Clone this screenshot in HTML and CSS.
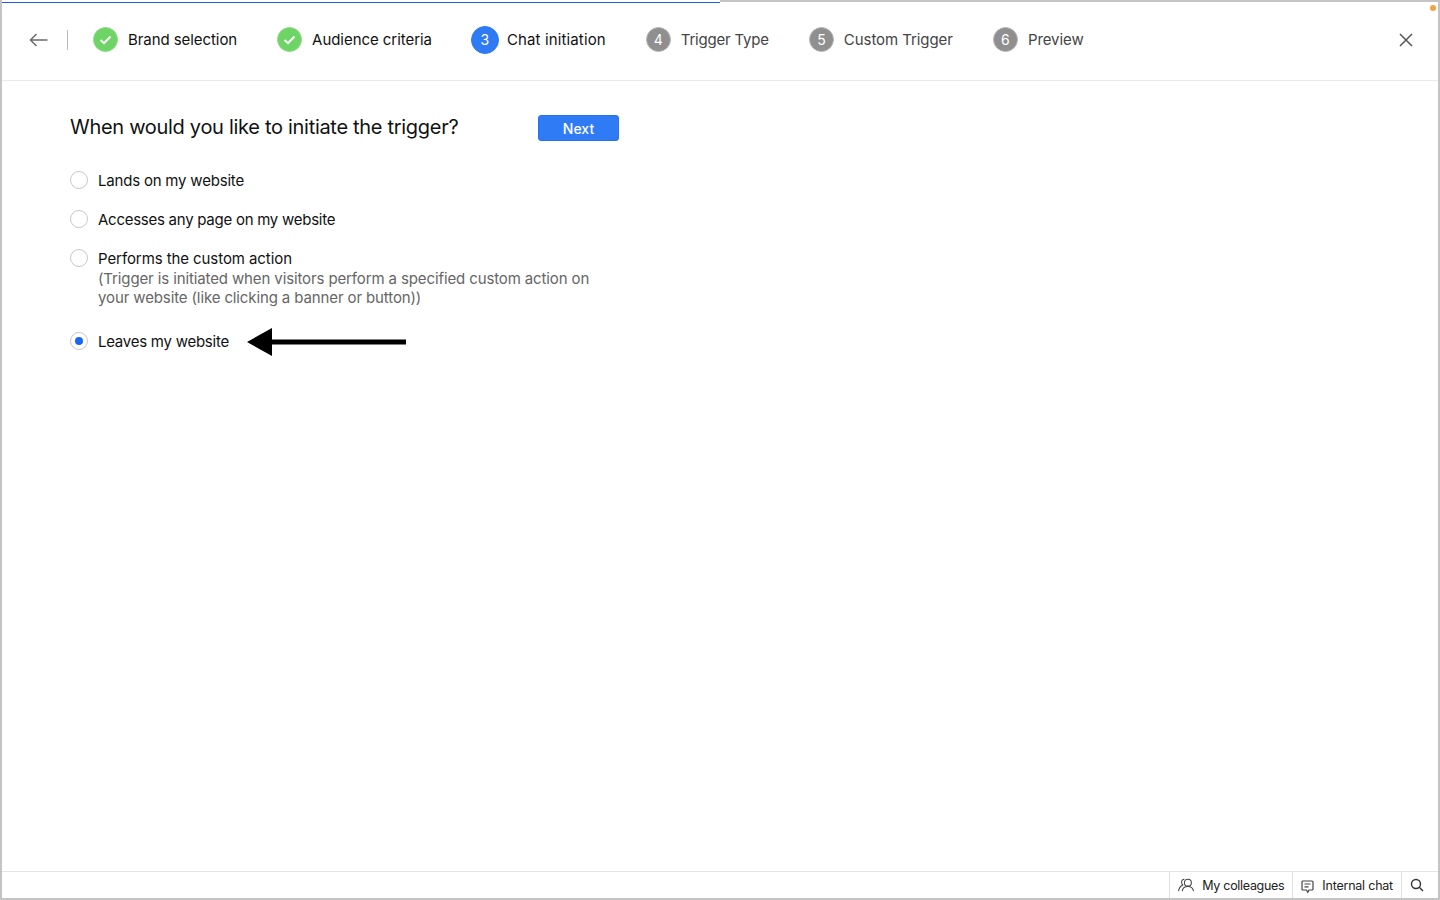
FILE: index.html
```html
<!DOCTYPE html>
<html lang="en">
<head>
<meta charset="utf-8">
<title>Chat initiation</title>
<link rel="stylesheet" href="styles.css">
</head>
<body>
<div class="frame">
  <div class="progress"><div class="progress-fill"></div><div class="progress-rest"></div></div>
  <span class="notice-dot"></span>
  <header class="topbar">
    <button class="icon-btn back" aria-label="Back">
      <svg width="20" height="14" viewBox="0 0 20 14" fill="none" stroke="#6b6b6b" stroke-width="1.5"><path d="M18.5 7H1.5M7.5 1L1.5 7L7.5 13"/></svg>
    </button>
    <span class="divider"></span>
    <ol class="steps">
      <li class="step done"><span class="badge"><svg width="13" height="10" viewBox="0 0 13 10" fill="none" stroke="#fff" stroke-width="2"><path d="M1.5 5L5 8.2L11.5 1.5"/></svg></span><span class="step-label">Brand selection</span></li>
      <li class="step done"><span class="badge"><svg width="13" height="10" viewBox="0 0 13 10" fill="none" stroke="#fff" stroke-width="2"><path d="M1.5 5L5 8.2L11.5 1.5"/></svg></span><span class="step-label">Audience criteria</span></li>
      <li class="step active"><span class="badge">3</span><span class="step-label">Chat initiation</span></li>
      <li class="step tight"><span class="badge">4</span><span class="step-label">Trigger Type</span></li>
      <li class="step"><span class="badge">5</span><span class="step-label">Custom Trigger</span></li>
      <li class="step"><span class="badge">6</span><span class="step-label">Preview</span></li>
    </ol>
    <button class="icon-btn close" aria-label="Close">
      <svg width="14" height="14" viewBox="0 0 14 14" fill="none" stroke="#555" stroke-width="1.5"><path d="M1 1L13 13M13 1L1 13"/></svg>
    </button>
  </header>
  <main class="content">
    <div class="question-row">
      <h1 class="question">When would you like to initiate the trigger?</h1>
      <button class="next">Next</button>
    </div>
    <div class="options">
      <div class="option"><span class="radio"></span><div class="option-text">Lands on my website</div></div>
      <div class="option narrow"><span class="radio"></span><div class="option-text">Accesses any page on my website</div></div>
      <div class="option wide"><span class="radio"></span><div class="option-text">Performs the custom action<p class="hint">(Trigger is initiated when visitors perform a specified custom action on your website (like clicking a banner or button))</p></div></div>
      <div class="option selected"><span class="radio checked"></span><div class="option-text">Leaves my website</div>
        <svg class="arrow" width="160" height="28" viewBox="0 0 160 28"><path d="M0 14L25 0V11.500H159V16.500H25V28Z" fill="#000"/></svg>
      </div>
    </div>
  </main>
  <footer class="bottombar">
    <div class="bar-item people"><svg width="16" height="14" viewBox="0 0 17 14" fill="none" stroke="#444" stroke-width="1.1"><circle cx="10.500" cy="4.500" r="3.700"/><path d="M4.500 13.500C4.800 10.500 7 8.500 10.500 8.500S16 10.500 16.500 13.500"/><path d="M6.800 .8C4.800 .8 3.800 2.500 3.800 4.200C3.800 5.400 4.200 6.400 5 7C2.800 8 1 10.500 .6 13.500"/></svg><span>My colleagues</span></div>
    <div class="bar-item chat"><svg class="chat-icon" width="13" height="14" viewBox="0 0 13 14" fill="none" stroke="#444" stroke-width="1.2"><path d="M2 1H11Q12 1 12 2V9Q12 10 11 10H8L6.800 12.300L5.500 10H2Q1 10 1 9V2Q1 1 2 1Z"/><path d="M3.500 4H9.500M3.500 6.800H7.500"/></svg><span>Internal chat</span></div>
    <div class="bar-item search"><svg width="14" height="14" viewBox="0 0 14 14" fill="none" stroke="#333" stroke-width="1.4"><circle cx="6" cy="6" r="4.500"/><path d="M9.300 9.300L13 13"/></svg></div>
  </footer>
</div>
</body>
</html>
```
FILE: styles.css
```css
* { box-sizing: border-box; }
html, body { margin: 0; height: 100%; }
body { font-family: Inter, "Noto Sans", "Liberation Sans", sans-serif; color: #111; background: #fff; overflow: hidden; }
button { font: inherit; border: 0; background: none; padding: 0; }

.frame { position: relative; height: 900px; display: flex; flex-direction: column; border: 2px solid #c4c4c4; border-top: 0; }
.progress { height: 3px; display: flex; flex: none; }
.progress-fill { width: 718px; height: 3px; border-bottom: 1px solid #1a5cf0; }
.progress-rest { flex: 1; height: 2px; background: #c4c4c4; }
.notice-dot { position: absolute; top: 5px; right: 2px; width: 6px; height: 6px; border-radius: 50%; background: #f5a23c; }

.topbar { height: 78px; flex: none; display: flex; align-items: center; border-bottom: 1px solid #e8e8e8; padding: 0 25px 4px 0; }
.icon-btn { display: flex; align-items: center; justify-content: center; }
.back { width: 20px; margin-left: 27px; }
.divider { width: 1px; height: 20px; background: #bdbdbd; margin-left: 18px; }
.steps { list-style: none; margin: 0 0 0 25px; padding: 0; display: flex; align-items: center; gap: 40px; flex: 1; }
.step { display: flex; align-items: center; gap: 10px; font-size: 15px; color: #444; letter-spacing: -0.07px; }
.step.tight { letter-spacing: -0.2px; }
.badge { width: 25px; height: 25px; border-radius: 50%; display: flex; align-items: center; justify-content: center; background: #8f8f8f; color: #fff; font-size: 14px; border: 1px solid #b9b9b9; }
.step.done { color: #111; }
.step.done:nth-child(2) { letter-spacing: -0.05px; }
.step.done .badge { background: #6fd466; border-color: #8fdc88; }
.step.active { color: #111; gap: 8px; margin-left: -1px; letter-spacing: 0.13px; }
.step.active .badge { width: 28px; height: 28px; background: #2f7bf5; border-color: #2f7bf5; }
.close { width: 14px; }

.content { flex: 1; padding: 31px 68px 0; }
.question-row { display: flex; align-items: center; height: 30px; }
.question { margin: 0; width: 468px; font-size: 20px; font-weight: 400; color: #111; letter-spacing: -0.3px; }
.next { width: 81px; height: 26px; margin-top: 2px; border-radius: 3px; background: #2f7bf5; border: 1px solid #2670ee; color: #fff; font-size: 14px; font-weight: 500; }

.options { margin-top: 29px; display: flex; flex-direction: column; gap: 20px; }
.option { display: flex; align-items: flex-start; gap: 10px; font-size: 15px; line-height: 19px; color: #111; letter-spacing: -0.2px; }
.option.narrow { letter-spacing: -0.26px; }
.option.wide { letter-spacing: -0.08px; }
.option.selected { margin-top: 5px; letter-spacing: -0.25px; }
.radio { flex: none; width: 18px; height: 18px; border-radius: 50%; border: 1px solid #c8c8c8; background: #fff; display: flex; align-items: center; justify-content: center; }
.radio.checked::after { content: ""; width: 8px; height: 8px; border-radius: 50%; background: #1a66f0; }
.option-text { width: 500px; flex: none; }
.option.selected .option-text { width: auto; }
.hint { margin: 1px 0 0; color: #666; letter-spacing: -0.12px; }
.arrow { margin-left: 8px; margin-top: -4px; flex: none; }

.bottombar { height: 27px; flex: none; display: flex; justify-content: flex-end; border-top: 1px solid #e4e4e4; font-size: 12.5px; color: #222; letter-spacing: -0.22px; }
.bar-item { display: flex; align-items: center; gap: 8px; padding: 0 8px; border-left: 1px solid #e0e0e0; }
.bar-item.people { letter-spacing: -0.3px; }
.chat-icon { margin-top: 3px; }
.bar-item.search { padding: 0 14px 0 8px; }
```
